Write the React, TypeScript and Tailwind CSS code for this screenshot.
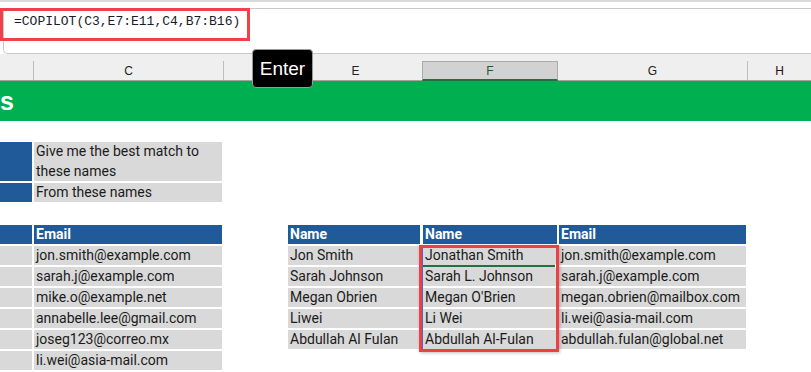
import React from "react";

const cellText = "text-[14px] text-[#1b1b1b] leading-[19px] whitespace-nowrap overflow-hidden";
const headText = "text-white font-bold text-[14px] leading-[19px] whitespace-nowrap overflow-hidden";

function LeftRow({ text, header }: { text: string; header?: boolean }) {
  return (
    <div className="flex h-[19px]">
      <div className={`w-[32px] ${header ? "bg-[#215a99]" : "bg-[#d9d9d9]"}`} />
      <div className={`ml-[2px] w-[188px] pl-[2px] ${header ? `bg-[#215a99] ${headText}` : `bg-[#d9d9d9] ${cellText}`}`}>
        {text}
      </div>
    </div>
  );
}

function RightRow({ a, b, c, header }: { a: string; b: string; c: string; header?: boolean }) {
  const cls = header ? `bg-[#215a99] pl-[2px] ${headText}` : `bg-[#d9d9d9] pl-[2px] ${cellText}`;
  return (
    <div className="flex h-[19px]">
      <div className={`ml-[288px] w-[132px] ${cls}`}>{a}</div>
      <div className={`ml-[3px] w-[134px] ${cls}`}>{b}</div>
      <div className={`ml-[2px] w-[187px] ${cls}`}>{c}</div>
    </div>
  );
}

export default function App() {
  const left = [
    "jon.smith@example.com",
    "sarah.j@example.com",
    "mike.o@example.net",
    "annabelle.lee@gmail.com",
    "joseg123@correo.mx",
    "li.wei@asia-mail.com",
  ];
  const right: [string, string, string][] = [
    ["Jon Smith", "Jonathan Smith", "jon.smith@example.com"],
    ["Sarah Johnson", "Sarah L. Johnson", "sarah.j@example.com"],
    ["Megan Obrien", "Megan O'Brien", "megan.obrien@mailbox.com"],
    ["Liwei", "Li Wei", "li.wei@asia-mail.com"],
    ["Abdullah Al Fulan", "Abdullah Al-Fulan", "abdullah.fulan@global.net"],
  ];

  return (
    <div className="relative w-[811px] h-[372px] overflow-hidden bg-white font-['Roboto',sans-serif]">
      {/* Formula bar */}
      <div className="h-[54px] border-t-2 border-[#dadada] pt-[6px] bg-white">
        <div className="ml-[3px] h-[46px] border border-r-0 border-[#c8c8c8] rounded-bl-[5px] pl-[10px] pt-[3px]">
          <div className="font-['Liberation_Mono',monospace] text-[13px] leading-[20px] text-[#1a1a2a] whitespace-nowrap">
            =COPILOT(C3,E7:E11,C4,B7:B16)
          </div>
        </div>
      </div>

      {/* Column headers */}
      <div className="h-[27px] bg-[#efefef] border-b border-[#a3a3a3] flex items-end text-[12px] font-['Liberation_Sans',sans-serif] text-[#222]">
        <div className="w-[33px] h-[19px]" />
        <div className="w-[190px] h-[19px] border-l border-[#bdbdbd] flex items-center justify-center">C</div>
        <div className="w-[65px] h-[19px] border-l border-[#bdbdbd]" />
        <div className="w-[134px] h-[19px] border-l border-[#bdbdbd] flex items-center justify-center">E</div>
        <div className="w-[136px] h-[20px] bg-[#d2d2d2] border-x border-t border-[#ababab] border-b-2 border-b-[#1e7145] flex items-center justify-center text-[#1e5a3c] mb-[-1px]">
          F
        </div>
        <div className="w-[189px] h-[19px] flex items-center justify-center">G</div>
        <div className="flex-1 h-[19px] border-l border-[#bdbdbd] flex items-center justify-center text-[#2a0a14]">H</div>
      </div>

      {/* Green banner */}
      <div className="h-[40px] bg-[#00b050] flex items-center">
        <span className="ml-0 text-white font-bold text-[25px] leading-none font-['Liberation_Sans',sans-serif] mt-[1px]">s</span>
      </div>

      <div className="h-[21px]" />

      {/* Prompt rows */}
      <div className="flex h-[39px]">
        <div className="w-[32px] bg-[#215a99]" />
        <div className="ml-[2px] w-[188px] bg-[#d9d9d9] pl-[2px] text-[14px] leading-[19.5px] text-[#1b1b1b]">
          Give me the best match to
          <br />
          these names
        </div>
      </div>
      <div className="h-[2px]" />
      <div className="flex h-[19px]">
        <div className="w-[32px] bg-[#215a99]" />
        <div className={`ml-[2px] w-[188px] bg-[#d9d9d9] pl-[2px] ${cellText}`}>From these names</div>
      </div>

      <div className="h-[23px]" />

      {/* Tables */}
      <div className="relative">
        <div className="absolute left-0 top-0 flex flex-col gap-[2px]">
          <LeftRow text="Email" header />
          {left.map((t) => (
            <LeftRow key={t} text={t} />
          ))}
        </div>
        <div className="flex flex-col gap-[2px]">
          <RightRow a="Name" b="Name" c="Email" header />
          {right.map((r) => (
            <RightRow key={r[0]} a={r[0]} b={r[1]} c={r[2]} />
          ))}
        </div>
      </div>

      {/* Spill highlight & active cell */}
      <div className="absolute left-[422px] top-[246px] w-[1px] h-[103px] bg-[#4a66c8]" />
      <div className="absolute left-[423px] top-[265px] w-[134px] h-[2px] bg-[#1f7246]" />
      <div className="absolute left-[555px] top-[264px] w-[4px] h-[4px] bg-[#1f7246] border border-white" />

      {/* Red annotation boxes */}
      <div className="absolute left-[419px] top-[245px] w-[140px] h-[107px] border-[3px] border-[#ee3f45] shadow-[1px_1px_3px_rgba(0,0,0,0.25)]" />
      <div className="absolute left-0 top-[8px] w-[250px] h-[33px] border-[3px] border-[#ef4147]" />

      {/* Enter tooltip */}
      <div className="absolute left-[252px] top-[49px] w-[61px] h-[39px] bg-black rounded-[4px] border border-[#9a9a9a] flex items-center justify-center">
        <span className="text-white text-[19px] font-['Liberation_Sans',sans-serif] leading-none">Enter</span>
      </div>
    </div>
  );
}
